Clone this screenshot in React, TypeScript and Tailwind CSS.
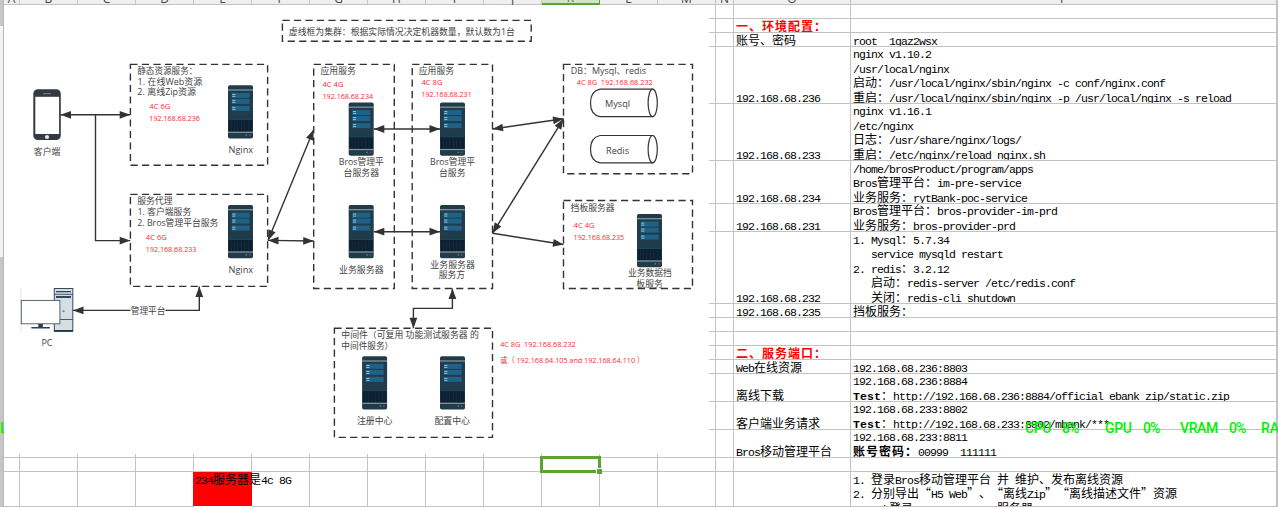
import React from "react";

const COLUMNS: { name: string; width: string }[] = [
  { name: "A", width: "w-[16px]" },
  { name: "B", width: "w-[58px]" },
  { name: "C", width: "w-[58px]" },
  { name: "D", width: "w-[58px]" },
  { name: "E", width: "w-[58px]" },
  { name: "F", width: "w-[58px]" },
  { name: "G", width: "w-[58px]" },
  { name: "H", width: "w-[58px]" },
  { name: "I", width: "w-[58px]" },
  { name: "J", width: "w-[58px]" },
  { name: "K", width: "w-[58px]" },
  { name: "L", width: "w-[58px]" },
  { name: "M", width: "w-[58px]" },
  { name: "N", width: "w-[18px]" },
  { name: "O", width: "w-[117px]" },
  { name: "P", width: "w-[426px]" },
];

type Segment = { text: string; bold?: boolean; red?: boolean };
type Line = string | Segment[];
type Row = { height: string; label?: Line; lines?: Line[]; flag?: string; top?: boolean };

const ROWS: Row[] = [
  { height: "h-[14px]" },
  { height: "h-[14px]", label: [{ text: "一、环境配置：", bold: true, red: true }] },
  { height: "h-[14px]", label: "账号、密码", lines: ["root  1qaz2wsx"] },
  {
    height: "h-[57px]",
    label: "192.168.68.236",
    lines: [
      "nginx v1.10.2",
      "/usr/local/nginx",
      "启动：/usr/local/nginx/sbin/nginx -c conf/nginx.conf",
      "重启：/usr/local/nginx/sbin/nginx -p /usr/local/nginx -s reload",
    ],
  },
  {
    height: "h-[57px]",
    label: "192.168.68.233",
    lines: ["nginx v1.16.1", "/etc/nginx", "日志：/usr/share/nginx/logs/", "重启：/etc/nginx/reload nginx.sh"],
  },
  {
    height: "h-[43px]",
    label: "192.168.68.234",
    lines: ["/home/brosProduct/program/apps", "Bros管理平台：im-pre-service", "业务服务：rytBank-poc-service"],
  },
  {
    height: "h-[28px]",
    label: "192.168.68.231",
    lines: ["Bros管理平台：bros-provider-im-prd", "业务服务：bros-provider-prd"],
  },
  {
    height: "h-[72px]",
    label: "192.168.68.232",
    lines: [
      "1. Mysql：5.7.34",
      "   service mysqld restart",
      "2. redis：3.2.12",
      "   启动：redis-server /etc/redis.conf",
      "   关闭：redis-cli shutdown",
    ],
  },
  { height: "h-[14px]", label: "192.168.68.235", lines: ["挡板服务："] },
  { height: "h-[14px]" },
  { height: "h-[14px]" },
  { height: "h-[14px]", label: [{ text: "二、服务端口：", bold: true, red: true }] },
  { height: "h-[14px]", label: "Web在线资源", lines: ["192.168.68.236:8803"] },
  {
    height: "h-[28px]",
    label: "离线下载",
    lines: [
      "192.168.68.236:8884",
      [{ text: "Test", bold: true }, { text: "：http://192.168.68.236:8884/official ebank zip/static.zip" }],
    ],
  },
  {
    height: "h-[28px]",
    label: "客户端业务请求",
    lines: [
      "192.168.68.233:8802",
      [{ text: "Test", bold: true }, { text: "：http://192.168.68.233:8802/mbank/***" }],
    ],
  },
  {
    height: "h-[28px]",
    label: "Bros移动管理平台",
    lines: ["192.168.68.233:8811", [{ text: "账号密码：", bold: true }, { text: "00999  111111" }]],
  },
  { height: "h-[14px]" },
  {
    height: "h-[35px]",
    flag: "234服务器是4c 8G",
    top: true,
    lines: [
      "1. 登录Bros移动管理平台 并 维护、发布离线资源",
      "2. 分别导出“H5 Web”、“离线Zip”“离线描述文件”资源",
      "3. ssh登录192.168.68.236服务器",
    ],
  },
];

function Run({ text, bold, red }: Segment) {
  const parts = text.match(/[\x20-\x7e]+|[^\x20-\x7e]+/g) ?? [];
  return (
    <span className={red ? "text-[#ff0000]" : "text-black"}>
      {parts.map((part, i) =>
        /^[\x20-\x7e]/.test(part) ? (
          <span
            key={i}
            className={
              "font-['Liberation_Mono',monospace] text-[11.5px] " +
              (bold ? "font-bold tracking-[0.1px]" : "tracking-[-0.9px]")
            }
          >
            {part}
          </span>
        ) : (
          <span
            key={i}
            className={
              "font-['Noto_Sans_CJK_SC',sans-serif] text-[12px] [text-spacing-trim:space-all] " +
              (bold ? "font-bold tracking-[1px]" : "")
            }
          >
            {part}
          </span>
        ),
      )}
    </span>
  );
}

function TextLine({ line }: { line: Line }) {
  const segments = typeof line === "string" ? [{ text: line }] : line;
  return (
    <div className="flex h-[14.5px] shrink-0 items-baseline whitespace-pre leading-[14.5px]">
      {segments.map((s, i) => (
        <Run key={i} {...s} />
      ))}
    </div>
  );
}

function Cell({ width, lines, top }: { width: string; lines?: Line[]; top?: boolean }) {
  return (
    <div
      className={
        "flex shrink-0 flex-col overflow-hidden border-r border-b border-[#c3c3c3] pl-[2px] " +
        (top ? "justify-start " : "justify-end ") +
        width
      }
    >
      <div className={top ? "-mt-[1.5px]" : ""}>{lines?.map((l, i) => <TextLine key={i} line={l} />)}</div>
    </div>
  );
}

function SheetRow({ row }: { row: Row }) {
  return (
    <div className={"flex shrink-0 " + row.height}>
      {COLUMNS.map((c) => {
        if (c.name === "O")
          return <Cell key={c.name} width={c.width} lines={row.label ? [row.label] : undefined} />;
        if (c.name === "P") return <Cell key={c.name} width={c.width} lines={row.lines} top={row.top} />;
        if (c.name === "E" && row.flag)
          return (
            <div key={c.name} className="z-10 -ml-px h-[34px] w-[59px] shrink-0 bg-[#ff0000] pl-[2px]">
              <div className="-mt-px">
                <TextLine line={row.flag} />
              </div>
            </div>
          );
        return <div key={c.name} className={"shrink-0 border-r border-b border-[#c3c3c3] " + c.width} />;
      })}
    </div>
  );
}

function Server({ x, y }: { x: number; y: number }) {
  return (
    <g transform={`translate(${x} ${y})`}>
      <rect width="25" height="53.3" rx="1.8" fill="#203b4a" />
      <rect y="4.1" width="25" height="1.2" fill="#8798a3" />
      {[7.6, 13.6, 20.6].map((t) => (
        <g key={t}>
          <rect x="3.6" y={t} width="18" height="5" fill="#1f6288" />
          <rect x="4.2" y={t + 1} width="3.2" height="1" fill="#8fc1dc" />
          <rect x="4.2" y={t + 3} width="3.2" height="1" fill="#8fc1dc" />
        </g>
      ))}
      <rect x="0.6" y="34.2" width="23.8" height="12.3" fill="#0c2031" />
      <rect x="0.6" y="34" width="23.8" height="0.8" fill="#1c5064" />
      {[3, 6, 9.5, 13, 16.5, 20].map((l) => (
        <rect key={l} x={l} y="36" width="0.6" height="9.5" fill="#1b3143" />
      ))}
      <rect y="46.4" width="25" height="1.2" fill="#8798a3" />
      <circle cx="18.3" cy="49.8" r="0.9" fill="#1d9e62" />
      <circle cx="21.8" cy="49.8" r="0.9" fill="#b83348" />
    </g>
  );
}

function Phone() {
  return (
    <g>
      <rect x="33.3" y="89.3" width="27.5" height="50.7" rx="4.5" fill="#363844" />
      <rect x="35.3" y="96.8" width="23.8" height="37.2" fill="#fff" />
      <rect x="43" y="93" width="8" height="1.2" rx="0.6" fill="#777a84" />
      <circle cx="47" cy="137" r="2.1" fill="#e8e8e8" />
    </g>
  );
}

function Computer() {
  return (
    <g>
      <rect x="20.5" y="288.5" width="0.8" height="43" fill="#dcdcdc" />
      <rect x="54.3" y="288.5" width="18.5" height="42.6" fill="#d7dde1" stroke="#35495e" strokeWidth="1" />
      <rect x="54" y="330" width="19" height="1.8" fill="#22384c" />
      <rect x="56" y="291" width="15" height="1.3" fill="#35495e" />
      <path d="M54 294.3H73M60 319.5H73" stroke="#35495e" strokeWidth="0.9" />
      <rect x="56" y="296" width="15" height="2" fill="#35495e" />
      <circle cx="63.6" cy="311.2" r="1" fill="#2f7fe0" />
      <rect x="21.3" y="300.4" width="38.6" height="23.4" fill="#fff" stroke="#44586b" strokeWidth="0.9" />
      <path d="M38.3 324h4.6v3h7v1.5h-18.6v-1.5h7z" fill="#2c4356" />
    </g>
  );
}

function Arrow({ points, start = false }: { points: [number, number][]; start?: boolean }) {
  const head = (tip: [number, number], from: [number, number]) => {
    const angle = (Math.atan2(tip[1] - from[1], tip[0] - from[0]) * 180) / Math.PI;
    return <path d="M0 0L-10.5 -3.9V3.9Z" fill="#333" transform={`translate(${tip[0]} ${tip[1]}) rotate(${angle})`} />;
  };
  const n = points.length;
  return (
    <g>
      <polyline points={points.map((p) => p.join(",")).join(" ")} fill="none" stroke="#333" strokeWidth="1.4" />
      {head(points[n - 1], points[n - 2])}
      {start && head(points[0], points[1])}
    </g>
  );
}

const BOXES: [number, number, number, number][] = [
  [282.4, 20.4, 531.2, 41.3],
  [130.4, 64.4, 267.6, 165.3],
  [130.4, 194.4, 267.6, 286.4],
  [313.7, 64.4, 394.3, 288.5],
  [412.2, 64.4, 492.5, 288.5],
  [563.5, 64.4, 692.5, 173.8],
  [563.5, 200.5, 692.5, 288.5],
  [334.4, 328.2, 492.5, 437.4],
];

// text, left, baseline, width
const LABELS: [string, number, number, number][] = [
  ["虚线框为集群：根据实际情况决定机器数量，默认数为1台", 288.8, 35.2, 226],
  ["静态资源服务：", 137.3, 74.3, 60],
  ["1. 在线Web资源", 137.6, 84.9, 64.6],
  ["2. 离线Zip资源", 137.3, 95.4, 58.8],
  ["Nginx", 228.5, 153, 24.6],
  ["客户端", 33.8, 154.5, 26.6],
  ["服务代理", 137.2, 204.4, 35.3],
  ["1. 客户端服务", 137.6, 215, 53.6],
  ["2. Bros管理平台服务", 137.3, 225.5, 81],
  ["Nginx", 228.5, 272.6, 24.6],
  ["PC", 41.5, 346.1, 11],
  ["应用服务", 320.5, 74.3, 35.3],
  ["应用服务", 418.8, 74.3, 35.3],
  ["Bros管理平", 338.8, 165, 45],
  ["台服务器", 343.5, 175.6, 35.6],
  ["Bros管理平", 430, 165, 45],
  ["台服务", 439, 175.6, 26.5],
  ["业务服务器", 339, 272.8, 44.6],
  ["业务服务器", 430.3, 267.6, 44.6],
  ["服务方", 438.7, 278.3, 26.5],
  ["DB：Mysql、redis", 570.8, 74.3, 75.2],
  ["Mysql", 605, 107, 25.2],
  ["Redis", 606, 153.5, 23],
  ["挡板服务器", 570.6, 210.5, 44],
  ["业务数据挡", 628, 276, 43.8],
  ["板服务", 636.3, 286.5, 26.5],
  ["中间件（可复用 功能测试服务器 的", 341.3, 338.1, 137.5],
  ["中间件服务）", 341.3, 348.6, 52],
  ["注册中心", 357, 424, 35.5],
  ["配置中心", 434.5, 424, 35.5],
  ["管理平台", 130.7, 314.4, 34.8],
];

const RED_LABELS: [string, number, number, number][] = [
  ["4C 6G", 149.3, 109, 21],
  ["192.168.68.236", 149.3, 121, 50.6],
  ["4C 6G", 145.8, 240, 21],
  ["192.168.68.233", 145.8, 252, 50.6],
  ["4C 4G", 322.5, 87.1, 21],
  ["192.168.68.234", 322.5, 99.1, 50.6],
  ["4C 8G", 421.5, 84.6, 21],
  ["192.168.68.231", 421.5, 96.5, 50.2],
  ["4C 8G  192.168.68.232", 576.8, 84.6, 76],
  ["4C 4G", 573.6, 228.3, 21],
  ["192.168.68.235", 573.6, 240.2, 50.6],
  ["4C 8G  192.168.68.232", 500.2, 347.2, 75.6],
  ["或（ 192.168.64.105 and 192.168.64.110 ）", 500.2, 363.4, 144],
];

const SERVERS: [number, number][] = [
  [228, 85.3],
  [228, 205],
  [348.7, 102.5],
  [440, 102.5],
  [348.7, 205],
  [440, 205],
  [637, 214],
  [362.1, 356.3],
  [440, 356.3],
];

function Diagram() {
  return (
    <svg viewBox="4 5 705 449" className="block h-[449px] w-[705px] bg-white">
      {BOXES.map(([l, t, r, b], i) => (
        <path
          key={i}
          d={`M${l} ${t}H${r}V${b}H${l}Z`}
          fill="none"
          stroke="#333"
          strokeWidth="1.4"
          strokeDasharray="7.2 4.3"
        />
      ))}
      {SERVERS.map(([x, y], i) => (
        <Server key={i} x={x} y={y} />
      ))}
      <Phone />
      <Computer />
      <Arrow start points={[[60.5, 114.8], [130.2, 114.8]]} />
      <Arrow points={[[95.5, 114.8], [95.5, 240.6], [130.2, 240.6]]} />
      <Arrow start points={[[73, 310.4], [199.3, 310.4], [199.3, 286.5]]} />
      <Arrow start points={[[268, 240.4], [313.7, 241]]} />
      <Arrow start points={[[268, 240.4], [313.7, 129.5]]} />
      <Arrow start points={[[373.8, 129], [440, 129]]} />
      <Arrow start points={[[373.8, 231.7], [440, 231.7]]} />
      <Arrow start points={[[492.5, 129], [563.5, 118.8]]} />
      <Arrow start points={[[492.5, 233.3], [563.5, 118.8]]} />
      <Arrow points={[[492.5, 233.3], [563.5, 244.5]]} />
      <Arrow start points={[[452.4, 288.5], [452.4, 308.4], [413.4, 308.4], [413.4, 328.2]]} />
      {[89.2, 135.5].map((t) => (
        <g key={t} fill="none" stroke="#333" strokeWidth="1.2">
          <path d={`M652.7 ${t}H600Q590.5 ${t + 2} 590.5 ${t + 13.7}Q590.5 ${t + 25.5} 600 ${t + 27.4}H652.7`} />
          <ellipse cx="652.7" cy={t + 13.7} rx="4.6" ry="13.7" />
        </g>
      ))}
      <rect x="130.5" y="304" width="35" height="12" fill="#fff" />
      <g className="font-['Open_Sans','Noto_Sans_CJK_SC',sans-serif] text-[8.8px] [text-spacing-trim:space-all]" fill="#444">
        {LABELS.map(([s, x, y, w], i) => (
          <text key={i} x={x} y={y} textLength={w} lengthAdjust="spacingAndGlyphs">
            {s}
          </text>
        ))}
      </g>
      <g className="font-['Open_Sans','Noto_Sans_CJK_SC',sans-serif] text-[7.8px] [text-spacing-trim:space-all]" fill="#fa2a30">
        {RED_LABELS.map(([s, x, y, w], i) => (
          <text key={i} x={x} y={y} textLength={w} lengthAdjust="spacingAndGlyphs" className="whitespace-pre">
            {s}
          </text>
        ))}
      </g>
    </svg>
  );
}

function HeaderRow() {
  return (
    <div className="flex h-[5px] shrink-0 overflow-hidden">
      {COLUMNS.map((c) => {
        const active = c.name === "K";
        return (
          <div
            key={c.name}
            className={
              "flex shrink-0 items-end justify-center border-r font-['Open_Sans',sans-serif] text-[12px] leading-[12px] " +
              (active
                ? "border-b-2 border-r-[#5aa532] border-b-[#5aa532] bg-[#d2e5cb] text-[#3f8a2a] "
                : "border-b border-[#c3c3c3] bg-[#efefef] text-[#444] ") +
              c.width
            }
          >
            <span className="-mb-px">{c.name}</span>
          </div>
        );
      })}
    </div>
  );
}

function Overlay() {
  return (
    <div className="absolute top-[420px] left-[1025px] flex w-[253px] overflow-hidden whitespace-pre font-['Roboto',sans-serif] text-[14px] leading-[16px] font-medium text-[#00f200]">
      <span className="w-[37px] shrink-0 tracking-[-0.4px]">CPU</span>
      <span className="w-[43px] shrink-0 tracking-[-0.9px]">8%</span>
      <span className="w-[38px] shrink-0 tracking-[-0.4px]">GPU</span>
      <span className="w-[37px] shrink-0 tracking-[-0.9px]">0%</span>
      <span className="w-[49px] shrink-0 tracking-[-0.4px]">VRAM</span>
      <span className="w-[32px] shrink-0 tracking-[-0.9px]">0%</span>
      <span className="shrink-0">RAM</span>
    </div>
  );
}

export default function App() {
  return (
    <div className="relative flex h-[507px] w-[1278px] overflow-hidden bg-white">
      <div className="flex w-[4px] shrink-0 flex-col border-r border-[#b8b8b8] bg-[#c6c6c6]">
        <div className="mt-[26px] h-[231px] bg-[#f3f3f3]" />
      </div>
      <div className="flex w-[1273px] shrink-0 flex-col">
        <HeaderRow />
        {ROWS.map((r, i) => (
          <SheetRow key={i} row={r} />
        ))}
      </div>
      <div className="-ml-px w-[2px] shrink-0 bg-[#c3c3c3]" />

      <div className="absolute top-[5px] left-[4px]">
        <Diagram />
      </div>
      <div className="absolute top-[456px] left-[540px] h-[17px] w-[61px] border-3 border-[#5aa532]">
        <div className="absolute -right-[4px] -bottom-[4px] size-[6px] border-t border-l border-white bg-[#5aa532]" />
      </div>
      <div className="absolute top-[420px] left-0 w-[4px] overflow-hidden font-['Roboto',sans-serif] text-[14px] leading-[16px] font-medium text-[#00f200]">
        LI
      </div>
      <Overlay />
    </div>
  );
}
